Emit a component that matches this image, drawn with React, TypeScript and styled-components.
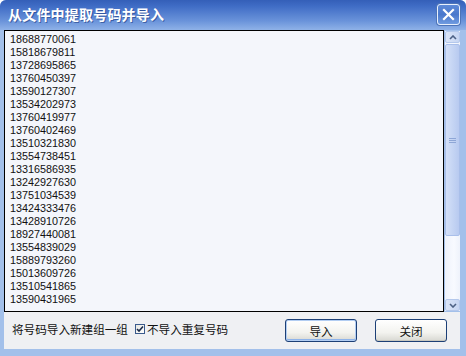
import React from "react";
import styled, { createGlobalStyle } from "styled-components";

const Colors = {
  frame: "#a3c0ea",
  frameDark: "#6f96d6",
  titleTop: "#3f6cc5",
  titleBottom: "#8fb2e8",
  face: "#eff0f3",
  paper: "#f4f6fb",
  navy: "#1c3f76",
};

const numbers = [
  "18688770061",
  "15818679811",
  "13728695865",
  "13760450397",
  "13590127307",
  "13534202973",
  "13760419977",
  "13760402469",
  "13510321830",
  "13554738451",
  "13316586935",
  "13242927630",
  "13751034539",
  "13424333476",
  "13428910726",
  "18927440081",
  "13554839029",
  "15889793260",
  "15013609726",
  "13510541865",
  "13590431965",
];

const GlobalStyle = createGlobalStyle`
  html, body {
    margin: 0;
    padding: 0;
    background: #ffffff;
  }
  * {
    box-sizing: border-box;
  }
`;

const Window = styled.div`
  width: 466px;
  height: 356px;
  display: flex;
  flex-direction: column;
  background: ${Colors.frame};
  border-radius: 6px 6px 0 0;
  overflow: hidden;
  font-family: "Noto Sans CJK SC", "Liberation Sans", sans-serif;
`;

const TitleBar = styled.div`
  height: 30px;
  flex: none;
  display: flex;
  align-items: center;
  justify-content: space-between;
  padding: 0 6px 0 8px;
  background: linear-gradient(
    to bottom,
    #345fb8 0%,
    ${Colors.titleTop} 20%,
    #6a93da 70%,
    ${Colors.titleBottom} 100%
  );
`;

const Title = styled.div`
  color: #ffffff;
  font-size: 14px;
  font-weight: 700;
  letter-spacing: 0.2px;
  line-height: 16px;
  margin-top: -2px;
  text-shadow: 1px 1px 0 rgba(20, 50, 120, 0.55);
`;

const CloseButton = styled.div`
  width: 23px;
  height: 21px;
  margin-top: -1px;
  border: 1px solid #e8f0fc;
  border-radius: 3px;
  background: linear-gradient(to bottom, #5d8ad8, #4a78cc 50%, #6f9be0);
  display: flex;
  align-items: center;
  justify-content: center;
  box-shadow: 0 0 0 1px #4d74b8;
`;

const Body = styled.div`
  flex: 1;
  display: flex;
  flex-direction: column;
  padding: 0 6px 7px 4px;
`;

const ListRow = styled.div`
  display: flex;
  height: 282px;
  flex: none;
`;

const ListBox = styled.div`
  width: 441px;
  height: 282px;
  border: 1px solid #000000;
  border-bottom-width: 1px;
  background: ${Colors.paper};
  padding: 2px 0 0 5px;
  overflow: hidden;
`;

const NumberLine = styled.div`
  font-family: "Liberation Sans", Arial, sans-serif;
  font-size: 10.8px;
  line-height: 13px;
  height: 13px;
  color: #111111;
`;

const ScrollBar = styled.div`
  width: 15px;
  margin: 1px 0 1px 1px;
  display: flex;
  flex-direction: column;
  background: linear-gradient(to right, #eef2fb, #f8faff 60%, #eef2fb);
`;

const ArrowButton = styled.div`
  width: 15px;
  height: 12px;
  flex: none;
  display: flex;
  align-items: center;
  justify-content: center;
  border: 1px solid #b4c8ec;
  border-radius: 2px;
  background: linear-gradient(to right, #dbe5f8, #c6d5f2);
`;

const Thumb = styled.div`
  height: 192px;
  flex: none;
  margin-top: 1px;
  border: 1px solid #a9bfea;
  border-radius: 2px;
  background: linear-gradient(to right, #d4e0f8, #c3d3f3 60%, #b8caf0);
  display: flex;
  align-items: center;
  justify-content: center;
`;

const Track = styled.div`
  flex: 1;
`;

const Footer = styled.div`
  flex: 1;
  display: flex;
  align-items: center;
  background: ${Colors.face};
  padding: 0 0 0 8px;
  font-size: 11.6px;
  color: #111111;
`;

const Label = styled.span`
  line-height: 14px;
  margin-top: -4px;
`;

const CheckGroup = styled.label`
  display: flex;
  align-items: center;
  margin-left: 7px;
  margin-top: -4px;
  gap: 2px;
`;

const CheckBox = styled.span`
  width: 10px;
  height: 10px;
  border: 1px solid #3a5a8c;
  background: linear-gradient(to bottom right, #e6e6e0, #ffffff);
  display: flex;
  align-items: center;
  justify-content: center;
`;

const Buttons = styled.div`
  display: flex;
  gap: 18px;
  margin-left: auto;
  margin-right: 13px;
`;

const Button = styled.div<{ $default?: boolean }>`
  width: 72px;
  height: 23px;
  border: 1px solid ${Colors.navy};
  border-radius: 3px;
  background: linear-gradient(to bottom, #ffffff, #f3f3ef 60%, #d8d8d2);
  box-shadow: ${({ $default }) =>
    $default
      ? "inset 0 0 0 1px #b2cdf2, inset 0 -1px 0 1px #8fb4ea"
      : "inset 0 -1px 0 #c8c8c0"};
  display: flex;
  align-items: center;
  justify-content: center;
  font-size: 11.6px;
  color: #111111;
`;

export default function App() {
  return (
    <>
      <GlobalStyle />
      <Window>
        <TitleBar>
          <Title>从文件中提取号码并导入</Title>
          <CloseButton>
            <svg width="13" height="13" viewBox="0 0 13 13">
              <path
                d="M2 2 L11 11 M11 2 L2 11"
                stroke="#ffffff"
                strokeWidth="2.2"
                strokeLinecap="square"
              />
            </svg>
          </CloseButton>
        </TitleBar>
        <Body>
          <ListRow>
            <ListBox>
              {numbers.map((n) => (
                <NumberLine key={n}>{n}</NumberLine>
              ))}
            </ListBox>
            <ScrollBar>
              <ArrowButton>
                <svg width="8" height="5" viewBox="0 0 8 5">
                  <path d="M1 4 L4 1 L7 4" stroke="#4d6185" strokeWidth="1.6" fill="none" />
                </svg>
              </ArrowButton>
              <Thumb>
                <svg width="7" height="7" viewBox="0 0 7 7">
                  <path d="M0 1.5 H7 M0 3.5 H7 M0 5.5 H7" stroke="#8ea6d6" strokeWidth="1" />
                </svg>
              </Thumb>
              <Track />
              <ArrowButton>
                <svg width="8" height="5" viewBox="0 0 8 5">
                  <path d="M1 1 L4 4 L7 1" stroke="#4d6185" strokeWidth="1.6" fill="none" />
                </svg>
              </ArrowButton>
            </ScrollBar>
          </ListRow>
          <Footer>
            <Label>将号码导入新建组一组</Label>
            <CheckGroup>
              <CheckBox>
                <svg width="8" height="8" viewBox="0 0 8 8">
                  <path d="M1 4 L3 6 L7 1.5" stroke="#1a2a4a" strokeWidth="1.6" fill="none" />
                </svg>
              </CheckBox>
              <span>不导入重复号码</span>
            </CheckGroup>
            <Buttons>
              <Button $default>导入</Button>
              <Button>关闭</Button>
            </Buttons>
          </Footer>
        </Body>
      </Window>
    </>
  );
}
